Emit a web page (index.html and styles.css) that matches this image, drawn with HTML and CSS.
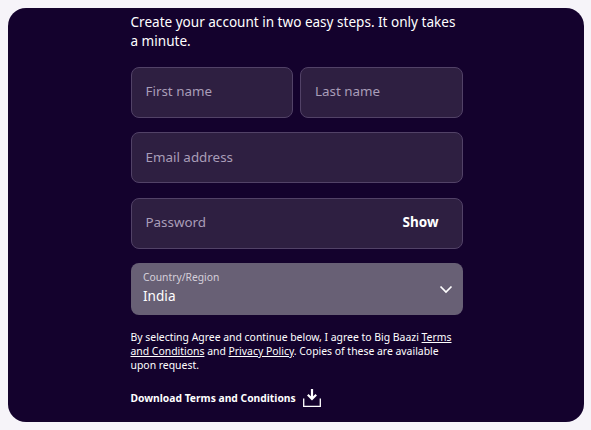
FILE: index.html
```html
<!DOCTYPE html>
<html lang="en">
<head>
  <meta charset="UTF-8">
  <meta name="viewport" content="width=device-width, initial-scale=1">
  <title>Create your account</title>
  <link rel="stylesheet" href="styles.css">
</head>
<body>
  <main class="panel">
    <form class="signup">
      <p class="intro">Create your account in two easy steps. It only takes a minute.</p>

      <div class="name-row">
        <div class="field"><span class="placeholder">First name</span></div>
        <div class="field"><span class="placeholder">Last name</span></div>
      </div>

      <div class="field"><span class="placeholder">Email address</span></div>

      <div class="field">
        <span class="placeholder">Password</span>
        <span class="show">Show</span>
      </div>

      <div class="select">
        <div class="select-text">
          <div class="select-label">Country/Region</div>
          <div class="select-value">India</div>
        </div>
        <svg class="chevron" width="14" height="9" viewBox="0 0 14 9" fill="none" stroke="#fff" stroke-width="1.7">
          <path d="M1.500 1.500 7 7l5.500-5.500"/>
        </svg>
      </div>

      <p class="legal">By selecting Agree and continue below, I agree to Big Baazi <a href="#">Terms and Conditions</a> and <a href="#">Privacy Policy</a>. Copies of these are available upon request.</p>

      <div class="download">
        <span>Download Terms and Conditions</span>
        <svg width="18" height="18" viewBox="0 0 18 18" fill="none" stroke="#fff">
          <path d="M.7 9.500v7.800h16.600V9.500" stroke-width="1.3"/>
          <path d="M9 0v9.500M4.800 5.800 9 10l4.200-4.200" stroke-width="2.200"/>
        </svg>
      </div>
    </form>
  </main>
</body>
</html>
```

FILE: styles.css
```css
:root {
  --bg: #f6f4f9;
  --panel: #14022d;
  --field: #2e1f41;
  --field-border: #524267;
  --select: #686075;
  --placeholder: #a99db8;
}

html, body {
  height: 100%;
}

body {
  margin: 0;
  background-color: var(--bg);
  color: white;
  font-family: "Noto Sans", Arial, sans-serif;
}

.panel {
  box-sizing: border-box;
  height: 414px;
  margin: 8px 7px 8px 8px;
  padding-left: 122.5px;
  background-color: var(--panel);
  border-radius: 18px;
  overflow: hidden;
}

.signup {
  width: 332px;
  display: flex;
  flex-direction: column;
}

.intro {
  margin: 5px 0 15.5px;
  font-size: 13.55px;
  line-height: 19px;
}

.name-row {
  display: flex;
  gap: 7px;
}

.name-row .field {
  flex: 1;
}

.field {
  box-sizing: border-box;
  height: 51px;
  margin-bottom: 14.5px;
  padding: 0 23px 2px 14px;
  display: flex;
  justify-content: space-between;
  align-items: center;
  background-color: var(--field);
  border: 1px solid var(--field-border);
  border-radius: 8px;
}

.placeholder {
  color: var(--placeholder);
  font-size: 13.4px;
}

.show {
  font-size: 13.5px;
  font-weight: 700;
}

.select {
  box-sizing: border-box;
  height: 52px;
  padding: 0 10px 0 12.5px;
  display: flex;
  justify-content: space-between;
  align-items: center;
  background-color: var(--select);
  border-radius: 8px;
}

.select-text {
  padding-bottom: 1px;
}

.select-label {
  color: #d5d0da;
  font-size: 10.3px;
  line-height: 15px;
}

.select-value {
  font-size: 13.6px;
  line-height: 22px;
}

.legal {
  margin: 14.5px 0 0;
  font-size: 10.42px;
  line-height: 14.4px;
}

.legal a {
  color: white;
}

.download {
  margin-top: 16px;
  display: flex;
  align-items: center;
  gap: 7px;
  font-size: 10.3px;
  font-weight: 700;
}
```
